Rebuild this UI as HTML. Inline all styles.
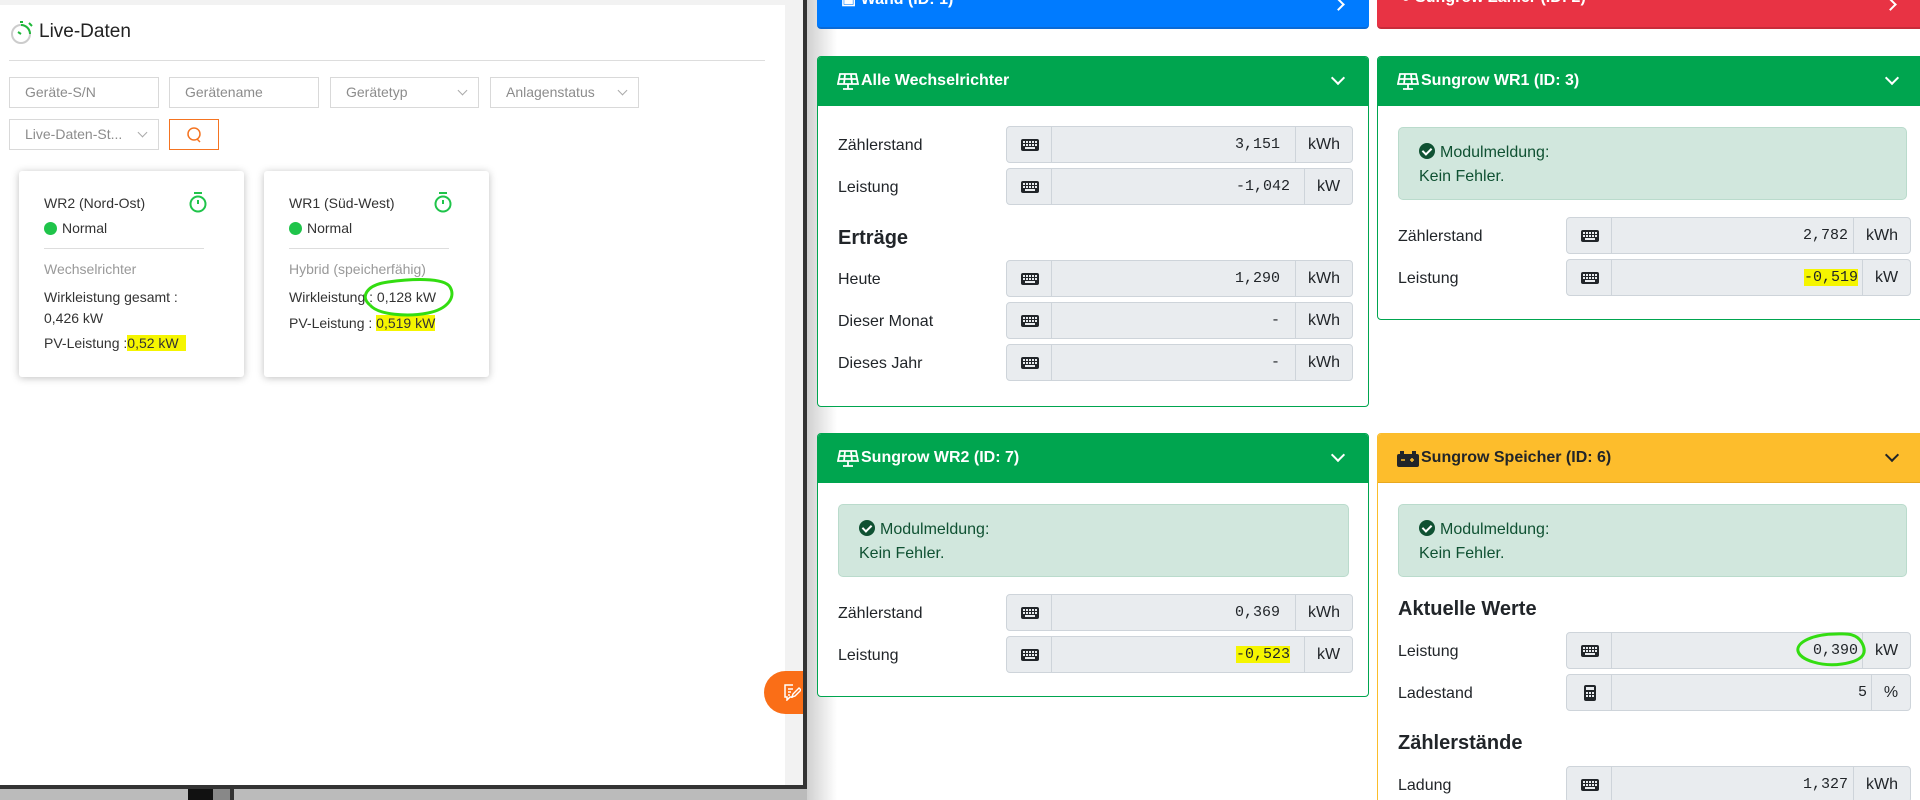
<!DOCTYPE html>
<html><head><meta charset="utf-8"><style>
*{box-sizing:border-box;margin:0;padding:0}
html,body{width:1920px;height:800px;overflow:hidden}
body{position:relative;background:#fff;font-family:"Liberation Sans",Arial,sans-serif;color:#212529}
.a{position:absolute}
.lp{left:0;top:0;width:803px;height:785px;background:#f2f2f2}
.lw{left:0;top:5px;width:785px;height:780px;background:#fff}
.inp{position:absolute;height:31px;border:1px solid #d9d9d9;background:#fff;color:#8c8c8c;font-size:14px;line-height:29px;padding-left:15px;white-space:nowrap}
.inp .ch{position:absolute;right:12px;top:9px;width:7px;height:7px;border-right:1px solid #aaa;border-bottom:1px solid #aaa;transform:rotate(45deg)}
.card{position:absolute;top:171px;width:225px;height:206px;background:#fff;box-shadow:0 1px 8px rgba(0,0,0,.25);border-radius:3px;font-size:14px;color:#333}
.card div{position:absolute;left:25px;white-space:nowrap;line-height:18px}
.dot{display:inline-block;width:13px;height:13px;border-radius:50%;background:#1fc44a;vertical-align:-2px;margin-right:5px}
.hl{background:#f5f500}
.bc{position:absolute;border-radius:4px;overflow:hidden;background:#fff}
.hd{position:absolute;left:0;right:0;top:0;height:50px;color:#fff;font-weight:bold;font-size:16px;line-height:50px;padding-left:44px}
.hd svg.i{position:absolute;left:20px;top:16px}
.chev{position:absolute;top:17px;width:10px;height:10px;border-right:2px solid #fff;border-bottom:2px solid #fff;transform:rotate(45deg)}
.lbl{position:absolute;font-size:16px;color:#212529;line-height:18px}
.ig{position:absolute;height:37px;border:1px solid #ced4da;border-radius:4px;background:#e9ecef;overflow:hidden}
.ig .ic{position:absolute;left:0;top:0;width:45px;height:35px;border-right:1px solid #ced4da}
.ig .ic svg{position:absolute;left:14px;top:12px}
.ig .v{position:absolute;top:0;height:35px;line-height:36px;font-family:"Liberation Mono",monospace;font-size:15px;text-align:right}
.ig .u{position:absolute;right:0;top:0;height:35px;line-height:35px;border-left:1px solid #ced4da;font-size:16px;text-align:center}
.h4{position:absolute;font-size:20px;font-weight:bold;line-height:24px}
.al{position:absolute;background:#d1e7dd;border:1px solid #badbcc;border-radius:5px;height:73px;font-size:16px;color:#0f5132;line-height:24px;padding:13px 0 0 20px}
.al b{display:inline-block;width:16px;height:16px;border-radius:50%;background:#0f5132;vertical-align:-2px;margin-right:5px;position:relative}
.al b:after{content:"";position:absolute;left:5px;top:3px;width:4px;height:7px;border-right:2px solid #fff;border-bottom:2px solid #fff;transform:rotate(45deg)}
</style></head><body>
<svg width="0" height="0" style="position:absolute"><defs>
<symbol id="kb" viewBox="0 0 18 12"><rect x="0" y="0" width="18" height="12" rx="2" fill="#212529"/><g fill="#e9ecef"><rect x="2" y="2" width="2" height="2"/><rect x="5" y="2" width="2" height="2"/><rect x="8" y="2" width="2" height="2"/><rect x="11" y="2" width="2" height="2"/><rect x="14" y="2" width="2" height="2"/><rect x="2" y="5" width="2" height="2"/><rect x="5" y="5" width="2" height="2"/><rect x="8" y="5" width="2" height="2"/><rect x="11" y="5" width="2" height="2"/><rect x="14" y="5" width="2" height="2"/><rect x="4" y="8" width="10" height="2"/></g></symbol>
<symbol id="sp" viewBox="0 0 22 20"><g fill="none" stroke="#fff" stroke-width="1.8"><path d="M3 2h16l2 10H1z"/><path d="M2 7h18M8 2l-1 10M14 2l1 10M11 12v5M6 17h10"/></g></symbol>
</defs></svg>

<!-- left panel -->
<div class="a lp"></div>
<div class="a lw"></div>
<div class="a" style="left:803px;top:0;width:4px;height:789px;background:#333"></div>
<div class="a" style="left:0;top:785px;width:807px;height:4px;background:#333"></div>
<div class="a" style="left:0;top:789px;width:807px;height:11px;background:#bbb"></div>
<div class="a" style="left:188px;top:789px;width:25px;height:11px;background:#111"></div>
<div class="a" style="left:213px;top:789px;width:17px;height:11px;background:#888"></div>
<div class="a" style="left:230px;top:789px;width:4px;height:11px;background:#333"></div>
<div class="a" style="left:807px;top:0;width:30px;height:800px;background:linear-gradient(90deg,#d0d0d0,#fff)"></div>

<svg class="a" style="left:9px;top:20px" width="26" height="26" viewBox="0 0 26 26"><circle cx="12" cy="14" r="9" fill="none" stroke="#ccc" stroke-width="2"/><path d="M12 5a9 9 0 0 1 9 9" fill="none" stroke="#1fb83a" stroke-width="2"/><path d="M12 14l-3-2" stroke="#1fb83a" stroke-width="2"/><path d="M11 2h3M20 3l3 3" stroke="#1fb83a" stroke-width="2"/></svg>
<div class="a" style="left:39px;top:21px;font-size:19px;color:#222">Live-Daten</div>
<div class="a" style="left:9px;top:60px;width:756px;height:1px;background:#ddd"></div>

<div class="inp" style="left:9px;top:77px;width:150px">Geräte-S/N</div>
<div class="inp" style="left:169px;top:77px;width:150px">Gerätename</div>
<div class="inp" style="left:330px;top:77px;width:149px">Gerätetyp<span class="ch"></span></div>
<div class="inp" style="left:490px;top:77px;width:149px">Anlagenstatus<span class="ch"></span></div>
<div class="inp" style="left:9px;top:119px;width:150px">Live-Daten-St...<span class="ch"></span></div>
<div class="a" style="left:169px;top:119px;width:50px;height:31px;border:1px solid #f57421"><svg style="position:absolute;left:16px;top:6px" width="17" height="18" viewBox="0 0 17 18"><circle cx="8" cy="8" r="6" fill="none" stroke="#f57421" stroke-width="1.5"/><path d="M11 13l3 3" stroke="#f57421" stroke-width="1.5"/></svg></div>

<div class="card" style="left:19px">
<div style="top:23px">WR2 (Nord-Ost)</div>
<svg style="position:absolute;left:169px;top:19px" width="20" height="24" viewBox="0 0 20 24"><circle cx="10" cy="14" r="7.5" fill="none" stroke="#1fc44a" stroke-width="2"/><path d="M6 3h8M10 10v4" stroke="#1fc44a" stroke-width="2"/></svg>
<div style="top:48px"><span class="dot"></span>Normal</div>
<div style="top:77px;width:160px;height:1px;background:#ddd"></div>
<div style="top:89px;color:#999">Wechselrichter</div>
<div style="top:117px">Wirkleistung gesamt :</div>
<div style="top:138px">0,426 kW</div>
<div style="top:163px">PV-Leistung :<span class="hl">0,52 kW&nbsp;&nbsp;</span></div>
</div>
<div class="card" style="left:264px">
<div style="top:23px">WR1 (Süd-West)</div>
<svg style="position:absolute;left:169px;top:19px" width="20" height="24" viewBox="0 0 20 24"><circle cx="10" cy="14" r="7.5" fill="none" stroke="#1fc44a" stroke-width="2"/><path d="M6 3h8M10 10v4" stroke="#1fc44a" stroke-width="2"/></svg>
<div style="top:48px"><span class="dot"></span>Normal</div>
<div style="top:77px;width:160px;height:1px;background:#ddd"></div>
<div style="top:89px;color:#999">Hybrid (speicherfähig)</div>
<div style="top:117px">Wirkleistung : 0,128 kW</div>
<div style="top:143px">PV-Leistung : <span class="hl">0,519 kW</span></div>
<svg style="position:absolute;left:94px;top:104px" width="98" height="42" viewBox="0 0 98 42"><path d="M12 30C2 22 8 10 30 7S86 2 92 12 90 34 70 38 20 40 12 30" fill="none" stroke="#33dd11" stroke-width="3"/></svg>
</div>
<div class="a" style="left:764px;top:671px;width:39px;height:43px;background:#fa6e17;border-radius:22px 0 0 22px"><svg style="position:absolute;left:19px;top:13px" width="18" height="17" viewBox="0 0 18 17"><path d="M10 1H2v12h2v3l3-3h3" fill="none" stroke="#fff" stroke-width="1.5"/><path d="M5 5h5M5 8h3M5 11h2M9 13l1-3 6-6 2 2-6 6z" fill="none" stroke="#fff" stroke-width="1.4"/></svg></div>

<!-- right: top bars -->
<div class="bc" style="left:817px;top:-6px;width:552px;height:35px;background:#007bff;border-bottom:2px solid #0a6ad6"><div style="position:absolute;left:24px;top:-5px;color:#fff;font-weight:bold;font-size:16px">▣ Wand (ID: 1)</div><div style="position:absolute;right:26px;top:6px;width:9px;height:9px;border-right:2px solid #fff;border-top:2px solid #fff;transform:rotate(45deg)"></div></div>
<div class="bc" style="left:1377px;top:-6px;width:560px;height:35px;background:#e83344;border-bottom:2px solid #c82c3a"><div style="position:absolute;left:24px;top:-5px;color:#fff;font-weight:bold;font-size:16px">● Sungrow Zähler (ID: 2)</div><div style="position:absolute;right:42px;top:6px;width:9px;height:9px;border-right:2px solid #fff;border-top:2px solid #fff;transform:rotate(45deg)"></div></div>

<!-- Alle Wechselrichter -->
<div class="bc" style="left:817px;top:56px;width:552px;height:351px;border:1px solid #00a54f">
<div class="hd" style="background:#00a54f;left:-1px;right:-1px;top:-1px"><svg class="i" width="22" height="20"><use href="#sp"/></svg>Alle Wechselrichter<span class="chev" style="right:26px"></span></div>
<div class="lbl" style="left:20px;top:80px">Zählerstand</div>
<div class="ig" style="left:188px;top:69px;width:347px"><div class="ic"><svg width="18" height="12"><use href="#kb"/></svg></div><div class="v" style="right:72px">3,151</div><div class="u" style="width:57px">kWh</div></div>
<div class="lbl" style="left:20px;top:122px">Leistung</div>
<div class="ig" style="left:188px;top:111px;width:347px"><div class="ic"><svg width="18" height="12"><use href="#kb"/></svg></div><div class="v" style="right:62px">-1,042</div><div class="u" style="width:48px">kW</div></div>
<div class="h4" style="left:20px;top:169px">Erträge</div>
<div class="lbl" style="left:20px;top:214px">Heute</div>
<div class="ig" style="left:188px;top:203px;width:347px"><div class="ic"><svg width="18" height="12"><use href="#kb"/></svg></div><div class="v" style="right:72px">1,290</div><div class="u" style="width:57px">kWh</div></div>
<div class="lbl" style="left:20px;top:256px">Dieser Monat</div>
<div class="ig" style="left:188px;top:245px;width:347px"><div class="ic"><svg width="18" height="12"><use href="#kb"/></svg></div><div class="v" style="right:72px">-</div><div class="u" style="width:57px">kWh</div></div>
<div class="lbl" style="left:20px;top:298px">Dieses Jahr</div>
<div class="ig" style="left:188px;top:287px;width:347px"><div class="ic"><svg width="18" height="12"><use href="#kb"/></svg></div><div class="v" style="right:72px">-</div><div class="u" style="width:57px">kWh</div></div>
</div>

<!-- Sungrow WR1 -->
<div class="bc" style="left:1377px;top:56px;width:560px;height:264px;border:1px solid #00a54f">
<div class="hd" style="background:#00a54f;left:-1px;right:-1px;top:-1px"><svg class="i" width="22" height="20"><use href="#sp"/></svg>Sungrow WR1 (ID: 3)<span class="chev" style="right:40px"></span></div>
<div class="al" style="left:20px;top:70px;width:509px"><b></b>Modulmeldung:<br>Kein Fehler.</div>
<div class="lbl" style="left:20px;top:171px">Zählerstand</div>
<div class="ig" style="left:188px;top:160px;width:345px"><div class="ic"><svg width="18" height="12"><use href="#kb"/></svg></div><div class="v" style="right:62px">2,782</div><div class="u" style="width:57px">kWh</div></div>
<div class="lbl" style="left:20px;top:213px">Leistung</div>
<div class="ig" style="left:188px;top:202px;width:345px"><div class="ic"><svg width="18" height="12"><use href="#kb"/></svg></div><div class="v" style="right:52px"><span class="hl">-0,519</span></div><div class="u" style="width:48px">kW</div></div>
</div>

<!-- Sungrow WR2 -->
<div class="bc" style="left:817px;top:433px;width:552px;height:264px;border:1px solid #00a54f">
<div class="hd" style="background:#00a54f;left:-1px;right:-1px;top:-1px"><svg class="i" width="22" height="20"><use href="#sp"/></svg>Sungrow WR2 (ID: 7)<span class="chev" style="right:26px"></span></div>
<div class="al" style="left:20px;top:70px;width:511px"><b></b>Modulmeldung:<br>Kein Fehler.</div>
<div class="lbl" style="left:20px;top:171px">Zählerstand</div>
<div class="ig" style="left:188px;top:160px;width:347px"><div class="ic"><svg width="18" height="12"><use href="#kb"/></svg></div><div class="v" style="right:72px">0,369</div><div class="u" style="width:57px">kWh</div></div>
<div class="lbl" style="left:20px;top:213px">Leistung</div>
<div class="ig" style="left:188px;top:202px;width:347px"><div class="ic"><svg width="18" height="12"><use href="#kb"/></svg></div><div class="v" style="right:62px"><span class="hl">-0,523</span></div><div class="u" style="width:48px">kW</div></div>
</div>

<!-- Speicher -->
<div class="bc" style="left:1377px;top:433px;width:560px;height:380px;border:1px solid #fbbd2b">
<div class="hd" style="background:#fdbd2c;color:#212529;left:-1px;right:-1px;top:-1px;border-bottom:1px solid #e8a820"><svg class="i" width="22" height="16" viewBox="0 0 22 16" style="top:18px"><rect x="0" y="3" width="22" height="13" rx="2" fill="#212529"/><rect x="3" y="0" width="4" height="3" fill="#212529"/><rect x="15" y="0" width="4" height="3" fill="#212529"/><path d="M4 9h4M15 7v4M13 9h4" stroke="#fdbd2c" stroke-width="1.5"/></svg>Sungrow Speicher (ID: 6)<span class="chev" style="right:40px;border-color:#212529"></span></div>
<div class="al" style="left:20px;top:70px;width:509px"><b></b>Modulmeldung:<br>Kein Fehler.</div>
<div class="h4" style="left:20px;top:163px">Aktuelle Werte</div>
<div class="lbl" style="left:20px;top:209px">Leistung</div>
<div class="ig" style="left:188px;top:198px;width:345px"><div class="ic"><svg width="18" height="12"><use href="#kb"/></svg></div><div class="v" style="right:52px">0,390</div><div class="u" style="width:48px">kW</div></div>
<svg style="position:absolute;left:414px;top:196px" width="78" height="40" viewBox="0 0 78 40"><path d="M44 4C22 4 4 12 6 21S30 37 50 34 76 24 70 13 52 4 44 4" fill="none" stroke="#33dd11" stroke-width="3"/></svg>
<div class="lbl" style="left:20px;top:251px">Ladestand</div>
<div class="ig" style="left:188px;top:240px;width:345px"><div class="ic"><svg width="12" height="16" viewBox="0 0 12 16" style="left:17px;top:10px"><rect width="12" height="16" rx="2" fill="#212529"/><rect x="2" y="2" width="8" height="3" fill="#e9ecef"/><g fill="#e9ecef"><rect x="2" y="7" width="2" height="2"/><rect x="5" y="7" width="2" height="2"/><rect x="8" y="7" width="2" height="2"/><rect x="2" y="10" width="2" height="2"/><rect x="5" y="10" width="2" height="2"/><rect x="8" y="10" width="2" height="2"/></g></svg></div><div class="v" style="right:43px">5</div><div class="u" style="width:39px">%</div></div>
<div class="h4" style="left:20px;top:297px">Zählerstände</div>
<div class="lbl" style="left:20px;top:343px">Ladung</div>
<div class="ig" style="left:188px;top:332px;width:345px"><div class="ic"><svg width="18" height="12"><use href="#kb"/></svg></div><div class="v" style="right:62px">1,327</div><div class="u" style="width:57px">kWh</div></div>
</div>
</body></html>
